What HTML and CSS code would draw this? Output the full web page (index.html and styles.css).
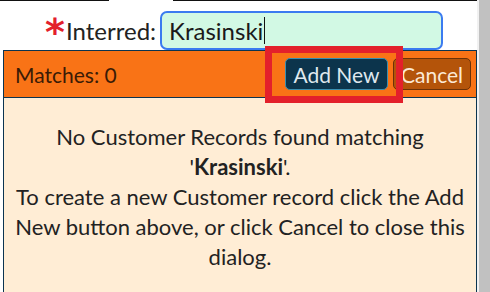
FILE: index.html
```html
<!DOCTYPE html>
<html lang="en">
<head>
  <meta charset="UTF-8">
  <title>Interred Lookup</title>
  <link rel="stylesheet" href="styles.css">
</head>
<body>

  <div class="page">
    <div class="topline">
      <span class="seg seg-left"></span>
      <span class="seg seg-right"></span>
    </div>

    <div class="field">
      <span class="required">*</span>
      <label for="interred">Interred:</label>
      <div class="input-box">
        <span id="interred" class="input-text">Krasinski</span><span class="caret"></span>
      </div>
    </div>

    <!-- Customer lookup dialog -->
    <div class="dialog">
      <div class="dialog-head">
        <span class="matches">Matches: 0</span>
        <div class="actions">
          <div class="add-wrap">
            <button class="btn btn-add">Add New</button>
            <span class="highlight"></span>
          </div>
          <button class="btn btn-cancel">Cancel</button>
        </div>
      </div>
      <div class="dialog-body">
        <p>No Customer Records found matching <span class="term">'<strong>Krasinski</strong>'.</span><br>
        To create a new Customer record click the Add New button above, or click Cancel to close this dialog.</p>
      </div>
    </div>
  </div>

  <div class="scrollbar"><div class="thumb"></div></div>

</body>
</html>
```

FILE: styles.css
```css
html, body {
  margin: 0;
  height: 292px;
  overflow: hidden;
}
body {
  font-family: Lato, "Open Sans", sans-serif;
  background: #fff;
  color: #222;
  display: flex;
}
.page {
  width: 477px;
}
.topline {
  display: flex;
  height: 1px;
}
.seg {
  display: block;
  height: 1px;
  background: #111;
}
.seg-left { width: 109px; }
.seg-right { width: 305px; margin-left: 64px; }

/* Interred field */
.field {
  display: flex;
  align-items: flex-start;
  padding-left: 45px;
  margin-top: 10px;
}
.required {
  color: #e3202b;
  font-size: 38px;
  line-height: 38px;
  height: 26px;
  width: 20px;
  font-family: "DejaVu Sans", sans-serif;
  font-weight: bold;
  margin-top: 2px;
}
.field label {
  font-size: 24px;
  line-height: 39px;
  margin-left: 1px;
  margin-right: 4px;
}
.input-box {
  width: 272px;
  height: 35px;
  border: 2px solid #3b7bf0;
  border-radius: 7px;
  background: #d2f9e4;
  display: flex;
  align-items: center;
  padding-left: 7px;
}
.input-text {
  font-size: 24px;
  color: #1a1a1a;
}
.caret {
  display: inline-block;
  width: 1px;
  height: 27px;
  background: #111;
  margin-left: 1px;
}

/* Dialog */
.dialog {
  margin-left: 3px;
  width: 472px;
  border: 1px solid #0b3450;
  border-bottom: none;
  height: 241px;
  background: #ffedd5;
}
.dialog-head {
  height: 46px;
  background: #f97316;
  border-bottom: 1px solid #0b3450;
  display: flex;
  align-items: center;
  padding: 0 5px 0 11px;
}
.matches {
  font-size: 21px;
  color: #3a1b06;
}
.actions {
  margin-left: auto;
  display: flex;
  gap: 5px;
}
.add-wrap {
  position: relative;
}
.btn {
  font-family: Lato, "Open Sans", sans-serif;
  font-size: 21px;
  height: 32px;
  border-radius: 5px;
  cursor: pointer;
  padding: 0;
}
.btn-add {
  width: 103px;
  background: #0c344c;
  color: #dfe8ee;
  border: 1px solid #3a8fb0;
}
.btn-cancel {
  width: 78px;
  background: #b4540a;
  color: #fbe9d6;
  border: 1px solid #6b3208;
}
.highlight {
  position: absolute;
  left: -20px;
  right: -15px;
  top: -12px;
  bottom: -13px;
  border: 7px solid #e3202b;
  pointer-events: none;
}
.dialog-body {
  text-align: center;
  padding: 24px 10px 0;
}
.dialog-body p {
  margin: 0;
  font-size: 22px;
  line-height: 30px;
  color: #222;
}
.term {
  white-space: nowrap;
}
.dialog-body strong {
  font-weight: bold;
}

/* fake scrollbar strip on the right */
.scrollbar {
  width: 13px;
  background: #f1f1f1;
  padding-left: 2px;
}
.thumb {
  height: 100%;
  background: #c1c1c1;
}
```
